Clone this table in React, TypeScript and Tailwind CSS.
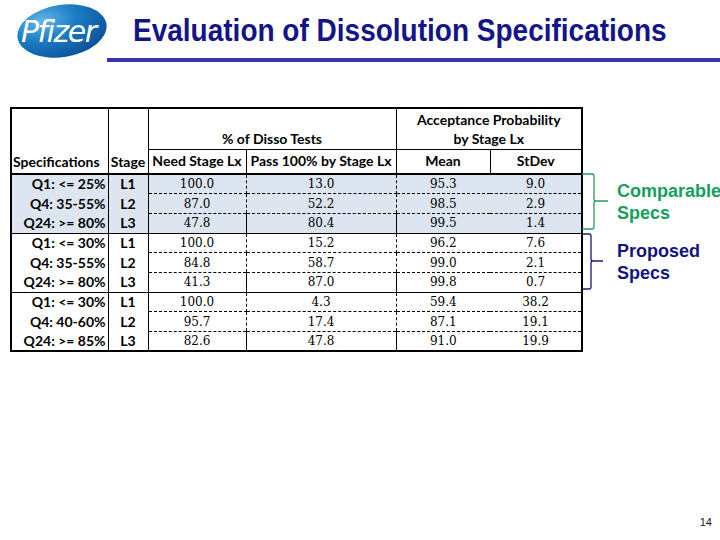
import React from 'react'

type Row = { spec: string; stage: string; need: string; pass: string; mean: string; sd: string }

const groups: { color: string; shaded: boolean; rows: Row[] }[] = [
  {
    color: 'text-[#12a05a]',
    shaded: true,
    rows: [
      { spec: 'Q1: <= 25%', stage: 'L1', need: '100.0', pass: '13.0', mean: '95.3', sd: '9.0' },
      { spec: 'Q4: 35-55%', stage: 'L2', need: '87.0', pass: '52.2', mean: '98.5', sd: '2.9' },
      { spec: 'Q24: >= 80%', stage: 'L3', need: '47.8', pass: '80.4', mean: '99.5', sd: '1.4' },
    ],
  },
  {
    color: 'text-[#1c1c7c]',
    shaded: false,
    rows: [
      { spec: 'Q1: <= 30%', stage: 'L1', need: '100.0', pass: '15.2', mean: '96.2', sd: '7.6' },
      { spec: 'Q4: 35-55%', stage: 'L2', need: '84.8', pass: '58.7', mean: '99.0', sd: '2.1' },
      { spec: 'Q24: >= 80%', stage: 'L3', need: '41.3', pass: '87.0', mean: '99.8', sd: '0.7' },
    ],
  },
  {
    color: 'text-black',
    shaded: false,
    rows: [
      { spec: 'Q1: <= 30%', stage: 'L1', need: '100.0', pass: '4.3', mean: '59.4', sd: '38.2' },
      { spec: 'Q4: 40-60%', stage: 'L2', need: '95.7', pass: '17.4', mean: '87.1', sd: '19.1' },
      { spec: 'Q24: >= 85%', stage: 'L3', need: '82.6', pass: '47.8', mean: '91.0', sd: '19.9' },
    ],
  },
]

function PfizerLogo() {
  return (
    <svg width="94" height="58" viewBox="0 0 94 58">
      <defs>
        <radialGradient id="pfz" cx="30%" cy="25%" r="85%">
          <stop offset="0%" stopColor="#5fb8ea" />
          <stop offset="45%" stopColor="#1b7cc4" />
          <stop offset="100%" stopColor="#0b4f96" />
        </radialGradient>
      </defs>
      <ellipse cx="47" cy="29" rx="45" ry="26" transform="rotate(-9 47 29)" fill="url(#pfz)" />
      <text
        x="6"
        y="40"
        fill="white"
        fontSize="30"
        fontStyle="italic"
        fontFamily="'DejaVu Sans', sans-serif"
        letterSpacing="-1.5"
      >
        Pfizer
      </text>
    </svg>
  )
}

function Bracket({ color, w, tip }: { color: string; w: number; tip: number }) {
  // curly bracket pointing right, 56px tall
  return (
    <svg width="36" height="58" viewBox="0 0 36 58" className="shrink-0">
      <path
        d={`M2 1 H${w - 2} Q${w} 1 ${w} 3 V26 Q${w} 28 ${w + 2} 28 H${tip} M${w + 2} 28 Q${w} 28 ${w} 30 V54 Q${w} 56 ${w - 2} 56 H2`}
        fill="none"
        stroke={color}
        strokeWidth="1.3"
      />
    </svg>
  )
}

export default function App() {
  const hdr = "font-['Lato',sans-serif] font-bold text-[14px] text-black"
  const num = "font-['DejaVu_Serif',serif] text-[12px] text-black text-center"

  return (
    <div className="w-[720px] h-[540px] bg-white flex flex-col overflow-hidden font-['Liberation_Sans',Arial,sans-serif]">
      {/* header */}
      <div className="flex h-[58px]">
        <div className="ml-[15px] mt-[2px]">
          <PfizerLogo />
        </div>
        <h1 className="ml-[24px] mt-[12px] origin-top scale-y-[1.15] text-[28px] leading-[32px] font-bold text-[#14148a] whitespace-nowrap">
          Evaluation of Dissolution Specifications
        </h1>
      </div>
      <div className="ml-[107px] h-[4px] bg-[#3535ad]" />

      {/* table + notes */}
      <div className="flex mt-[45px] ml-[10px]">
        <table className="border-collapse border-2 border-black table-fixed w-[571px]">
          <colgroup>
            <col className="w-[97px]" />
            <col className="w-[40px]" />
            <col className="w-[98px]" />
            <col className="w-[150px]" />
            <col className="w-[94px]" />
            <col className="w-[92px]" />
          </colgroup>
          <thead>
            <tr className="h-[41px]">
              <th rowSpan={2} className={`${hdr} border-r border-black align-bottom text-left pl-[1px] pb-[1px] leading-[20px]`}>
                Specifications
              </th>
              <th rowSpan={2} className={`${hdr} border-r border-black align-bottom text-center pb-[1px] leading-[20px]`}>
                Stage
              </th>
              <th colSpan={2} className={`${hdr} border-r border-b border-black align-bottom text-center pb-[1px] leading-[19px]`}>
                % of Disso Tests
              </th>
              <th colSpan={2} className={`${hdr} border-b border-black align-bottom text-center pb-[1px] leading-[19px]`}>
                Acceptance Probability
                <br />
                by Stage Lx
              </th>
            </tr>
            <tr className="h-[25px] border-b-2 border-black">
              <th className={`${hdr} border-r border-black text-center leading-[20px] whitespace-nowrap`}>Need Stage Lx</th>
              <th className={`${hdr} border-r border-black text-center leading-[20px] whitespace-nowrap`}>Pass 100% by Stage Lx</th>
              <th className={`${hdr} border-r border-black text-center leading-[20px]`}>Mean</th>
              <th className={`${hdr} text-center leading-[20px]`}>StDev</th>
            </tr>
          </thead>
          <tbody>
            {groups.map((g, gi) =>
              g.rows.map((r, ri) => {
                const last = ri === g.rows.length - 1
                const line = last ? 'border-b border-solid border-black' : 'border-b border-dashed border-black'
                return (
                  <tr key={`${gi}-${ri}`} className={`h-[19.7px] ${g.shaded ? 'bg-[#dce5f0]' : 'bg-white'}`}>
                    <td className={`${hdr} ${g.color} text-right pr-[2px] leading-[18px] border-r border-black whitespace-nowrap ${last ? 'border-b border-black' : ''}`}>
                      {r.spec}
                    </td>
                    <td className={`${hdr} text-center leading-[18px] border-r border-black ${last ? 'border-b border-black' : ''}`}>
                      {r.stage}
                    </td>
                    <td className={`${num} border-r border-black ${line}`}>{r.need}</td>
                    <td className={`${num} border-r border-black ${line}`}>{r.pass}</td>
                    <td className={`${num} ${line}`}>{r.mean}</td>
                    <td className={`${num} ${line}`}>{r.sd}</td>
                  </tr>
                )
              })
            )}
          </tbody>
        </table>

        <div className="flex flex-col -ml-[3px] mt-[66px] gap-[2px]">
          <div className="flex items-center">
            <Bracket color="#2a9a5c" w={14} tip={28} />
            <div className="ml-[1px] text-[18px] leading-[22px] font-bold text-[#12a05a]">
              Comparable
              <br />
              Specs
            </div>
          </div>
          <div className="flex items-center">
            <Bracket color="#1c1c6c" w={11} tip={23} />
            <div className="ml-[1px] text-[18px] leading-[22px] font-bold text-[#14147e]">
              Proposed
              <br />
              Specs
            </div>
          </div>
        </div>
      </div>

      <div className="mt-auto self-end mr-[8px] mb-[11px] text-[11px] leading-[13px] text-[#101040]">14</div>
    </div>
  )
}
